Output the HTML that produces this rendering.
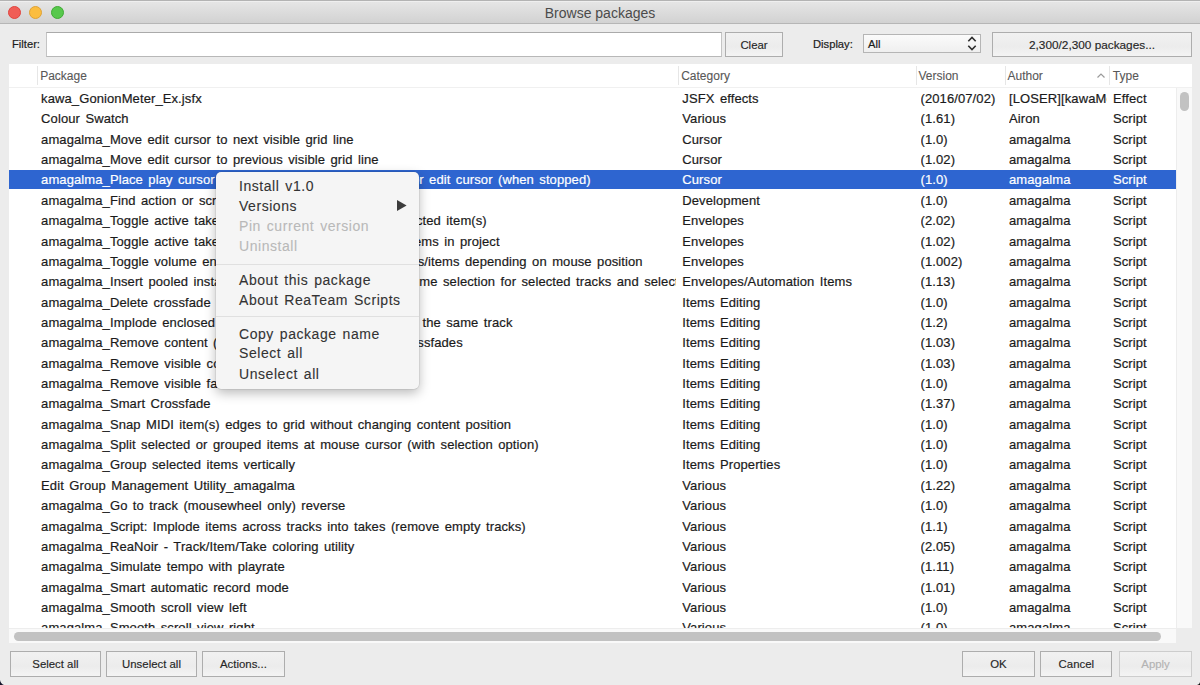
<!DOCTYPE html>
<html><head><meta charset="utf-8"><style>
*{box-sizing:border-box}
html,body{margin:0;padding:0}
body{width:1200px;height:685px;position:relative;overflow:hidden;background:#ececec;font-family:"Liberation Sans",sans-serif;}
.abs{position:absolute}
.titlebar{position:absolute;left:0;top:0;width:1200px;height:24px;background:linear-gradient(#e6e6e6,#d2d2d2);border-top:1px solid #b3b3b3;border-bottom:1px solid #b6b6b6;box-shadow:inset 0 1px 0 #efefef}
.title{position:absolute;left:0;width:1200px;top:5px;text-align:center;font-size:14px;color:#4b4b4b;line-height:16px}
.tl{position:absolute;top:6px;width:13px;height:13px;border-radius:50%}
.lbl{position:absolute;-webkit-text-stroke:0.2px currentColor;font-size:11.2px;color:#1c1c1c;line-height:13px}
.btn{position:absolute;-webkit-text-stroke:0.15px currentColor;border:1px solid #adadad;background:linear-gradient(#f1f1f1,#ececec 60%,#f4f4f4);font-size:11.4px;color:#262626;text-align:center;line-height:23px}
.table{position:absolute;left:9px;top:64px;width:1183px;height:579px;background:#fff;overflow:hidden}
.hdr{position:absolute;left:0;top:0;width:1183px;height:24px;background:#fff;border-bottom:1px solid #f0f0f0}
.hsep{position:absolute;top:2px;width:1px;height:19px;background:#e6e6e6}
.htxt{position:absolute;-webkit-text-stroke:0.1px currentColor;top:5px;font-size:12px;color:#585858;line-height:14px;white-space:nowrap}
.cell{position:absolute;-webkit-text-stroke:0.2px currentColor;font-size:13px;letter-spacing:0.1px;word-spacing:1.7px;color:#1b1b1b;white-space:nowrap;overflow:hidden;line-height:16px}
.sel .cell{color:#fff}
.menu{position:absolute;left:216px;top:172px;width:203px;height:217px;background:#f5f5f5;border-radius:5px;box-shadow:0 4px 12px rgba(0,0,0,0.28),0 0 0 0.5px rgba(0,0,0,0.12)}
.mi{position:absolute;-webkit-text-stroke:0.1px currentColor;left:23px;font-size:14px;letter-spacing:0.55px;word-spacing:1.5px;color:#333;white-space:nowrap;line-height:16px}
.mi.dis{color:#b9b9b9}
.msep{position:absolute;left:0;width:203px;height:1px;background:#e0e0e0}
</style></head><body>

<div class="titlebar"></div>
<div class="title">Browse packages</div>
<div class="tl" style="left:8px;background:#f05d56;border:0.5px solid #e0443e"></div>
<div class="tl" style="left:29.3px;background:#fbbd3f;border:0.5px solid #dea236"></div>
<div class="tl" style="left:50.6px;background:#57c84c;border:0.5px solid #3fab34"></div>
<div class="lbl" style="left:12px;top:37.8px">Filter:</div>
<div class="abs" style="left:46px;top:32px;width:676px;height:25px;background:#fff;border:1px solid #c4c4c4;border-top-color:#aaaaaa;border-bottom-color:#b8b8b8"></div>
<div class="btn" style="left:725px;top:32px;width:58px;height:25px;padding-top:0.7px">Clear</div>
<div class="lbl" style="left:813px;top:37.8px">Display:</div>
<div class="abs" style="left:863px;top:34px;width:118px;height:19px;border:1px solid #b5b5b5;background:linear-gradient(#fbfbfb,#efefef);"></div>
<div class="lbl" style="left:868px;top:38px">All</div>
<svg class="abs" style="left:965px;top:35px" width="14" height="17" viewBox="0 0 14 17"><path d="M3.3 6.3 L7 2.4 L10.7 6.3 M3.3 10.8 L7 14.6 L10.7 10.8" fill="none" stroke="#2e2e2e" stroke-width="1.6"/></svg>
<div class="btn" style="left:992px;top:32px;width:200px;height:25px;font-size:11.8px;line-height:24px">2,300/2,300 packages...</div>
<div class="table">
<div class="hdr">
<div class="hsep" style="left:27.6px"></div>
<div class="hsep" style="left:668.9px"></div>
<div class="hsep" style="left:906.5px"></div>
<div class="hsep" style="left:995.5px"></div>
<div class="hsep" style="left:1099.5px"></div>
<div class="htxt" style="left:31.2px">Package</div>
<div class="htxt" style="left:672.2px">Category</div>
<div class="htxt" style="left:909.5px">Version</div>
<div class="htxt" style="left:998.5px">Author</div>
<div class="htxt" style="left:1103.8px">Type</div>
<svg class="abs" style="left:1086.5px;top:8px" width="10" height="7" viewBox="0 0 10 7"><path d="M1.5 5.5 L5 2 L8.5 5.5" fill="none" stroke="#9a9a9a" stroke-width="1.2"/></svg>
</div>
<div class="row" style="position:absolute;left:0;top:24.50px;width:1167px;height:19.2px;">
<div class="cell" style="left:32.1px;top:2.5px;width:634.9px">kawa_GonionMeter_Ex.jsfx</div>
<div class="cell" style="left:673.3px;top:2.5px;width:232.7px">JSFX effects</div>
<div class="cell" style="left:911.5px;top:2.5px;width:83.5px">(2016/07/02)</div>
<div class="cell" style="left:1000.0px;top:2.5px;width:98.0px">[LOSER][kawaMeter]</div>
<div class="cell" style="left:1104.0px;top:2.5px;width:63.0px">Effect</div>
</div>
<div class="row" style="position:absolute;left:0;top:44.86px;width:1167px;height:19.2px;">
<div class="cell" style="left:32.1px;top:2.5px;width:634.9px">Colour Swatch</div>
<div class="cell" style="left:673.3px;top:2.5px;width:232.7px">Various</div>
<div class="cell" style="left:911.5px;top:2.5px;width:83.5px">(1.61)</div>
<div class="cell" style="left:1000.0px;top:2.5px;width:98.0px">Airon</div>
<div class="cell" style="left:1104.0px;top:2.5px;width:63.0px">Script</div>
</div>
<div class="row" style="position:absolute;left:0;top:65.22px;width:1167px;height:19.2px;">
<div class="cell" style="left:32.1px;top:2.5px;width:634.9px">amagalma_Move edit cursor to next visible grid line</div>
<div class="cell" style="left:673.3px;top:2.5px;width:232.7px">Cursor</div>
<div class="cell" style="left:911.5px;top:2.5px;width:83.5px">(1.0)</div>
<div class="cell" style="left:1000.0px;top:2.5px;width:98.0px">amagalma</div>
<div class="cell" style="left:1104.0px;top:2.5px;width:63.0px">Script</div>
</div>
<div class="row" style="position:absolute;left:0;top:85.58px;width:1167px;height:19.2px;">
<div class="cell" style="left:32.1px;top:2.5px;width:634.9px">amagalma_Move edit cursor to previous visible grid line</div>
<div class="cell" style="left:673.3px;top:2.5px;width:232.7px">Cursor</div>
<div class="cell" style="left:911.5px;top:2.5px;width:83.5px">(1.02)</div>
<div class="cell" style="left:1000.0px;top:2.5px;width:98.0px">amagalma</div>
<div class="cell" style="left:1104.0px;top:2.5px;width:63.0px">Script</div>
</div>
<div class="row sel" style="position:absolute;left:0;top:105.94px;width:1167px;height:19.2px;background:#2e65d0;">
<div class="cell" style="left:32.1px;top:2.5px;width:634.9px">amagalma_Place play cursor at mouse position and move</div>
<div class="cell" style="left:673.3px;top:2.5px;width:232.7px">Cursor</div>
<div class="cell" style="left:911.5px;top:2.5px;width:83.5px">(1.0)</div>
<div class="cell" style="left:1000.0px;top:2.5px;width:98.0px">amagalma</div>
<div class="cell" style="left:1104.0px;top:2.5px;width:63.0px">Script</div>
<div class="cell" style="left:371px;top:2.5px;width:210.7px;text-align:right;direction:rtl"><span style="direction:ltr;unicode-bidi:embed">to mouse cursor or edit cursor (when stopped)</span></div>
</div>
<div class="row" style="position:absolute;left:0;top:126.30px;width:1167px;height:19.2px;">
<div class="cell" style="left:32.1px;top:2.5px;width:634.9px">amagalma_Find action or script</div>
<div class="cell" style="left:673.3px;top:2.5px;width:232.7px">Development</div>
<div class="cell" style="left:911.5px;top:2.5px;width:83.5px">(1.0)</div>
<div class="cell" style="left:1000.0px;top:2.5px;width:98.0px">amagalma</div>
<div class="cell" style="left:1104.0px;top:2.5px;width:63.0px">Script</div>
</div>
<div class="row" style="position:absolute;left:0;top:146.66px;width:1167px;height:19.2px;">
<div class="cell" style="left:32.1px;top:2.5px;width:634.9px">amagalma_Toggle active take envelope of selec</div>
<div class="cell" style="left:673.3px;top:2.5px;width:232.7px">Envelopes</div>
<div class="cell" style="left:911.5px;top:2.5px;width:83.5px">(2.02)</div>
<div class="cell" style="left:1000.0px;top:2.5px;width:98.0px">amagalma</div>
<div class="cell" style="left:1104.0px;top:2.5px;width:63.0px">Script</div>
<div class="cell" style="left:371px;top:2.5px;width:106.8px;text-align:right;direction:rtl"><span style="direction:ltr;unicode-bidi:embed">of selected item(s)</span></div>
</div>
<div class="row" style="position:absolute;left:0;top:167.02px;width:1167px;height:19.2px;">
<div class="cell" style="left:32.1px;top:2.5px;width:634.9px">amagalma_Toggle active take envelopes of all ite</div>
<div class="cell" style="left:673.3px;top:2.5px;width:232.7px">Envelopes</div>
<div class="cell" style="left:911.5px;top:2.5px;width:83.5px">(1.02)</div>
<div class="cell" style="left:1000.0px;top:2.5px;width:98.0px">amagalma</div>
<div class="cell" style="left:1104.0px;top:2.5px;width:63.0px">Script</div>
<div class="cell" style="left:371px;top:2.5px;width:119.7px;text-align:right;direction:rtl"><span style="direction:ltr;unicode-bidi:embed">of all items in project</span></div>
</div>
<div class="row" style="position:absolute;left:0;top:187.38px;width:1167px;height:19.2px;">
<div class="cell" style="left:32.1px;top:2.5px;width:634.9px">amagalma_Toggle volume envelope of track</div>
<div class="cell" style="left:673.3px;top:2.5px;width:232.7px">Envelopes</div>
<div class="cell" style="left:911.5px;top:2.5px;width:83.5px">(1.002)</div>
<div class="cell" style="left:1000.0px;top:2.5px;width:98.0px">amagalma</div>
<div class="cell" style="left:1104.0px;top:2.5px;width:63.0px">Script</div>
<div class="cell" style="left:371px;top:2.5px;width:262.7px;text-align:right;direction:rtl"><span style="direction:ltr;unicode-bidi:embed">of tracks/items depending on mouse position</span></div>
</div>
<div class="row" style="position:absolute;left:0;top:207.74px;width:1167px;height:19.2px;">
<div class="cell" style="left:32.1px;top:2.5px;width:634.9px">amagalma_Insert pooled instances in ti</div>
<div class="cell" style="left:673.3px;top:2.5px;width:232.7px">Envelopes/Automation Items</div>
<div class="cell" style="left:911.5px;top:2.5px;width:83.5px">(1.13)</div>
<div class="cell" style="left:1000.0px;top:2.5px;width:98.0px">amagalma</div>
<div class="cell" style="left:1104.0px;top:2.5px;width:63.0px">Script</div>
<div class="cell" style="left:410.3px;top:2.5px;width:256.7px">me selection for selected tracks and selected items</div>
</div>
<div class="row" style="position:absolute;left:0;top:228.10px;width:1167px;height:19.2px;">
<div class="cell" style="left:32.1px;top:2.5px;width:634.9px">amagalma_Delete crossfade under mouse</div>
<div class="cell" style="left:673.3px;top:2.5px;width:232.7px">Items Editing</div>
<div class="cell" style="left:911.5px;top:2.5px;width:83.5px">(1.0)</div>
<div class="cell" style="left:1000.0px;top:2.5px;width:98.0px">amagalma</div>
<div class="cell" style="left:1104.0px;top:2.5px;width:63.0px">Script</div>
</div>
<div class="row" style="position:absolute;left:0;top:248.46px;width:1167px;height:19.2px;">
<div class="cell" style="left:32.1px;top:2.5px;width:634.9px">amagalma_Implode enclosed items into takes in</div>
<div class="cell" style="left:673.3px;top:2.5px;width:232.7px">Items Editing</div>
<div class="cell" style="left:911.5px;top:2.5px;width:83.5px">(1.2)</div>
<div class="cell" style="left:1000.0px;top:2.5px;width:98.0px">amagalma</div>
<div class="cell" style="left:1104.0px;top:2.5px;width:63.0px">Script</div>
<div class="cell" style="left:371px;top:2.5px;width:132.5px;text-align:right;direction:rtl"><span style="direction:ltr;unicode-bidi:embed">in the same track</span></div>
</div>
<div class="row" style="position:absolute;left:0;top:268.82px;width:1167px;height:19.2px;">
<div class="cell" style="left:32.1px;top:2.5px;width:634.9px">amagalma_Remove content (trim) of cro</div>
<div class="cell" style="left:673.3px;top:2.5px;width:232.7px">Items Editing</div>
<div class="cell" style="left:911.5px;top:2.5px;width:83.5px">(1.03)</div>
<div class="cell" style="left:1000.0px;top:2.5px;width:98.0px">amagalma</div>
<div class="cell" style="left:1104.0px;top:2.5px;width:63.0px">Script</div>
<div class="cell" style="left:371px;top:2.5px;width:82.8px;text-align:right;direction:rtl"><span style="direction:ltr;unicode-bidi:embed">of crossfades</span></div>
</div>
<div class="row" style="position:absolute;left:0;top:289.18px;width:1167px;height:19.2px;">
<div class="cell" style="left:32.1px;top:2.5px;width:634.9px">amagalma_Remove visible content</div>
<div class="cell" style="left:673.3px;top:2.5px;width:232.7px">Items Editing</div>
<div class="cell" style="left:911.5px;top:2.5px;width:83.5px">(1.03)</div>
<div class="cell" style="left:1000.0px;top:2.5px;width:98.0px">amagalma</div>
<div class="cell" style="left:1104.0px;top:2.5px;width:63.0px">Script</div>
</div>
<div class="row" style="position:absolute;left:0;top:309.54px;width:1167px;height:19.2px;">
<div class="cell" style="left:32.1px;top:2.5px;width:634.9px">amagalma_Remove visible fades</div>
<div class="cell" style="left:673.3px;top:2.5px;width:232.7px">Items Editing</div>
<div class="cell" style="left:911.5px;top:2.5px;width:83.5px">(1.0)</div>
<div class="cell" style="left:1000.0px;top:2.5px;width:98.0px">amagalma</div>
<div class="cell" style="left:1104.0px;top:2.5px;width:63.0px">Script</div>
</div>
<div class="row" style="position:absolute;left:0;top:329.90px;width:1167px;height:19.2px;">
<div class="cell" style="left:32.1px;top:2.5px;width:634.9px">amagalma_Smart Crossfade</div>
<div class="cell" style="left:673.3px;top:2.5px;width:232.7px">Items Editing</div>
<div class="cell" style="left:911.5px;top:2.5px;width:83.5px">(1.37)</div>
<div class="cell" style="left:1000.0px;top:2.5px;width:98.0px">amagalma</div>
<div class="cell" style="left:1104.0px;top:2.5px;width:63.0px">Script</div>
</div>
<div class="row" style="position:absolute;left:0;top:350.26px;width:1167px;height:19.2px;">
<div class="cell" style="left:32.1px;top:2.5px;width:634.9px">amagalma_Snap MIDI item(s) edges to grid without changing content position</div>
<div class="cell" style="left:673.3px;top:2.5px;width:232.7px">Items Editing</div>
<div class="cell" style="left:911.5px;top:2.5px;width:83.5px">(1.0)</div>
<div class="cell" style="left:1000.0px;top:2.5px;width:98.0px">amagalma</div>
<div class="cell" style="left:1104.0px;top:2.5px;width:63.0px">Script</div>
</div>
<div class="row" style="position:absolute;left:0;top:370.62px;width:1167px;height:19.2px;">
<div class="cell" style="left:32.1px;top:2.5px;width:634.9px">amagalma_Split selected or grouped items at mouse cursor (with selection option)</div>
<div class="cell" style="left:673.3px;top:2.5px;width:232.7px">Items Editing</div>
<div class="cell" style="left:911.5px;top:2.5px;width:83.5px">(1.0)</div>
<div class="cell" style="left:1000.0px;top:2.5px;width:98.0px">amagalma</div>
<div class="cell" style="left:1104.0px;top:2.5px;width:63.0px">Script</div>
</div>
<div class="row" style="position:absolute;left:0;top:390.98px;width:1167px;height:19.2px;">
<div class="cell" style="left:32.1px;top:2.5px;width:634.9px">amagalma_Group selected items vertically</div>
<div class="cell" style="left:673.3px;top:2.5px;width:232.7px">Items Properties</div>
<div class="cell" style="left:911.5px;top:2.5px;width:83.5px">(1.0)</div>
<div class="cell" style="left:1000.0px;top:2.5px;width:98.0px">amagalma</div>
<div class="cell" style="left:1104.0px;top:2.5px;width:63.0px">Script</div>
</div>
<div class="row" style="position:absolute;left:0;top:411.34px;width:1167px;height:19.2px;">
<div class="cell" style="left:32.1px;top:2.5px;width:634.9px">Edit Group Management Utility_amagalma</div>
<div class="cell" style="left:673.3px;top:2.5px;width:232.7px">Various</div>
<div class="cell" style="left:911.5px;top:2.5px;width:83.5px">(1.22)</div>
<div class="cell" style="left:1000.0px;top:2.5px;width:98.0px">amagalma</div>
<div class="cell" style="left:1104.0px;top:2.5px;width:63.0px">Script</div>
</div>
<div class="row" style="position:absolute;left:0;top:431.70px;width:1167px;height:19.2px;">
<div class="cell" style="left:32.1px;top:2.5px;width:634.9px">amagalma_Go to track (mousewheel only) reverse</div>
<div class="cell" style="left:673.3px;top:2.5px;width:232.7px">Various</div>
<div class="cell" style="left:911.5px;top:2.5px;width:83.5px">(1.0)</div>
<div class="cell" style="left:1000.0px;top:2.5px;width:98.0px">amagalma</div>
<div class="cell" style="left:1104.0px;top:2.5px;width:63.0px">Script</div>
</div>
<div class="row" style="position:absolute;left:0;top:452.06px;width:1167px;height:19.2px;">
<div class="cell" style="left:32.1px;top:2.5px;width:634.9px">amagalma_Script: Implode items across tracks into takes (remove empty tracks)</div>
<div class="cell" style="left:673.3px;top:2.5px;width:232.7px">Various</div>
<div class="cell" style="left:911.5px;top:2.5px;width:83.5px">(1.1)</div>
<div class="cell" style="left:1000.0px;top:2.5px;width:98.0px">amagalma</div>
<div class="cell" style="left:1104.0px;top:2.5px;width:63.0px">Script</div>
</div>
<div class="row" style="position:absolute;left:0;top:472.42px;width:1167px;height:19.2px;">
<div class="cell" style="left:32.1px;top:2.5px;width:634.9px">amagalma_ReaNoir - Track/Item/Take coloring utility</div>
<div class="cell" style="left:673.3px;top:2.5px;width:232.7px">Various</div>
<div class="cell" style="left:911.5px;top:2.5px;width:83.5px">(2.05)</div>
<div class="cell" style="left:1000.0px;top:2.5px;width:98.0px">amagalma</div>
<div class="cell" style="left:1104.0px;top:2.5px;width:63.0px">Script</div>
</div>
<div class="row" style="position:absolute;left:0;top:492.78px;width:1167px;height:19.2px;">
<div class="cell" style="left:32.1px;top:2.5px;width:634.9px">amagalma_Simulate tempo with playrate</div>
<div class="cell" style="left:673.3px;top:2.5px;width:232.7px">Various</div>
<div class="cell" style="left:911.5px;top:2.5px;width:83.5px">(1.11)</div>
<div class="cell" style="left:1000.0px;top:2.5px;width:98.0px">amagalma</div>
<div class="cell" style="left:1104.0px;top:2.5px;width:63.0px">Script</div>
</div>
<div class="row" style="position:absolute;left:0;top:513.14px;width:1167px;height:19.2px;">
<div class="cell" style="left:32.1px;top:2.5px;width:634.9px">amagalma_Smart automatic record mode</div>
<div class="cell" style="left:673.3px;top:2.5px;width:232.7px">Various</div>
<div class="cell" style="left:911.5px;top:2.5px;width:83.5px">(1.01)</div>
<div class="cell" style="left:1000.0px;top:2.5px;width:98.0px">amagalma</div>
<div class="cell" style="left:1104.0px;top:2.5px;width:63.0px">Script</div>
</div>
<div class="row" style="position:absolute;left:0;top:533.50px;width:1167px;height:19.2px;">
<div class="cell" style="left:32.1px;top:2.5px;width:634.9px">amagalma_Smooth scroll view left</div>
<div class="cell" style="left:673.3px;top:2.5px;width:232.7px">Various</div>
<div class="cell" style="left:911.5px;top:2.5px;width:83.5px">(1.0)</div>
<div class="cell" style="left:1000.0px;top:2.5px;width:98.0px">amagalma</div>
<div class="cell" style="left:1104.0px;top:2.5px;width:63.0px">Script</div>
</div>
<div class="row" style="position:absolute;left:0;top:553.86px;width:1167px;height:19.2px;">
<div class="cell" style="left:32.1px;top:2.5px;width:634.9px">amagalma_Smooth scroll view right</div>
<div class="cell" style="left:673.3px;top:2.5px;width:232.7px">Various</div>
<div class="cell" style="left:911.5px;top:2.5px;width:83.5px">(1.0)</div>
<div class="cell" style="left:1000.0px;top:2.5px;width:98.0px">amagalma</div>
<div class="cell" style="left:1104.0px;top:2.5px;width:63.0px">Script</div>
</div>
<div class="abs" style="left:1167px;top:24px;width:16px;height:540px;background:#f9f9f9;border-left:1px solid #ededed"></div>
<div class="abs" style="left:1171px;top:27.5px;width:9px;height:19px;border-radius:5px;background:#c2c2c2"></div>
<div class="abs" style="left:0;top:564px;width:1167px;height:15px;background:#f9f9f9;border-top:1px solid #ededed"></div>
<div class="abs" style="left:4.5px;top:568px;width:1147.2px;height:8.5px;border-radius:5px;background:#c2c2c2"></div>
<div class="abs" style="left:1167px;top:564px;width:16px;height:15px;background:#ececec"></div>
</div>
<div class="menu">
<div class="mi" style="top:5.7px">Install v1.0</div>
<div class="mi" style="top:25.6px">Versions</div>
<div class="mi dis" style="top:46.0px">Pin current version</div>
<div class="mi dis" style="top:66.3px">Uninstall</div>
<div class="mi" style="top:100.0px">About this package</div>
<div class="mi" style="top:119.7px">About ReaTeam Scripts</div>
<div class="mi" style="top:153.7px">Copy package name</div>
<div class="mi" style="top:173.4px">Select all</div>
<div class="mi" style="top:193.7px">Unselect all</div>
<div class="msep" style="top:92.2px"></div>
<div class="msep" style="top:144.1px"></div>
<svg class="abs" style="left:181px;top:28px" width="10" height="11" viewBox="0 0 10 11"><path d="M0 0 L9.6 5.5 L0 11 Z" fill="#3c3c3c"/></svg>
</div>
<div class="btn" style="left:10.0px;top:651px;width:90.8px;height:26px;line-height:24.5px;">Select all</div>
<div class="btn" style="left:106.3px;top:651px;width:90.4px;height:26px;line-height:24.5px;">Unselect all</div>
<div class="btn" style="left:202.2px;top:651px;width:82.5px;height:26px;line-height:24.5px;">Actions...</div>
<div class="btn" style="left:962.0px;top:651px;width:72.8px;height:26px;line-height:24.5px;">OK</div>
<div class="btn" style="left:1040.2px;top:651px;width:72.3px;height:26px;line-height:24.5px;">Cancel</div>
<div class="btn" style="left:1119.4px;top:651px;width:72.3px;height:26px;line-height:24.5px;color:#b3b3b3;border-color:#cdcdcd;">Apply</div>
<svg class="abs" style="left:0;top:680px" width="4" height="5" viewBox="0 0 4 5"><path d="M0 0 C0.5 2.5 1.5 4 4 5 L0 5 Z" fill="#15152a"/></svg>
<svg class="abs" style="left:1197px;top:682px" width="3" height="3" viewBox="0 0 3 3"><path d="M3 0 C2.7 1.5 1.8 2.5 0 3 L3 3 Z" fill="#111"/></svg>
</body></html>
